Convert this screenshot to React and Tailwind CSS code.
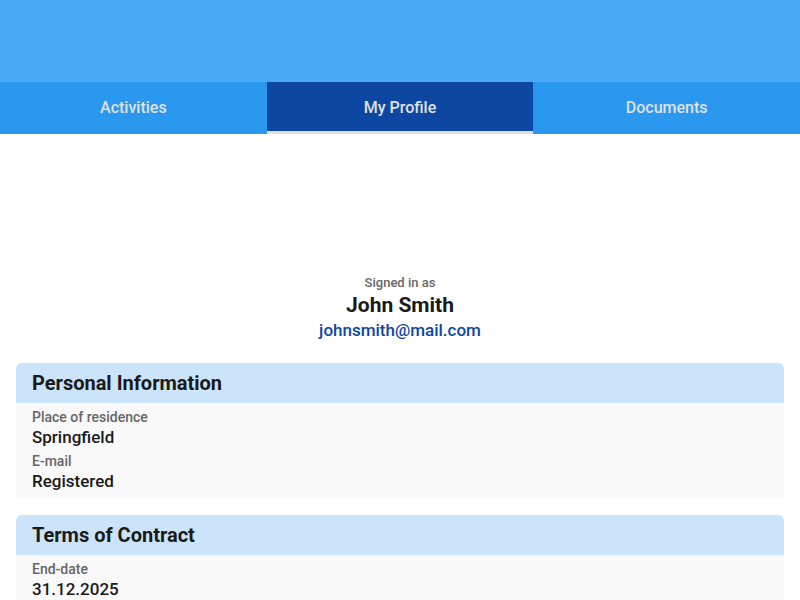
import { useState } from 'react';

const tabs = ['Activities', 'My Profile', 'Documents'];

const sections = [
  {
    title: 'Personal Information',
    fields: [
      { label: 'Place of residence', value: 'Springfield' },
      { label: 'E-mail', value: 'Registered' },
    ],
  },
  {
    title: 'Terms of Contract',
    fields: [{ label: 'End-date', value: '31.12.2025' }],
  },
];

export default function App() {
  const [active, setActive] = useState(1);

  return (
    <div className="min-h-screen bg-white font-['Roboto',sans-serif]">
      {/* Header */}
      <div className="h-[82px] bg-[#4aa9f5]"></div>

      {/* Tabs */}
      <div className="grid grid-cols-3 bg-[#2b98f0]">
        {tabs.map((tab, i) => (
          <button
            key={tab}
            type="button"
            onClick={() => setActive(i)}
            className={
              i === active
                ? 'h-[52px] bg-[#0d47a1] border-b-[3px] border-b-[#e0e0e0] pt-[3px] text-[16px] font-medium text-[#e0e0e0]'
                : 'h-[52px] text-[16px] font-medium text-[#e0e0e0]'
            }
          >
            {tab}
          </button>
        ))}
      </div>

      <div className="px-4">
        {/* Profile summary */}
        <div className="pt-[140px] flex flex-col items-center">
          <p className="text-[13px] leading-[18px] font-medium text-[#666666]">Signed in as</p>
          <h1 className="text-[21px] leading-[26px] font-bold text-[#1a1a1a]">John Smith</h1>
          <a href="#" className="text-[17px] leading-[24px] font-medium text-[#0d47a1]">
            johnsmith@mail.com
          </a>
        </div>

        {/* Sections */}
        <div className="mt-[21px] flex flex-col gap-[17px]">
          {sections.map((section) => (
            <div key={section.title} className="rounded-md overflow-hidden bg-[#f9f9f9]">
              <div className="h-10 bg-[#cbe4fa] px-4 flex items-center">
                <h2 className="text-[20px] font-bold text-[#1a1a1a]">{section.title}</h2>
              </div>
              <div className="px-4 pt-1 pb-[7px] flex flex-col gap-1">
                {section.fields.map((field) => (
                  <div key={field.label}>
                    <p className="text-[14px] leading-5 font-medium text-[#666666]">{field.label}</p>
                    <p className="text-[17px] leading-5 font-medium text-[#1a1a1a]">{field.value}</p>
                  </div>
                ))}
              </div>
            </div>
          ))}
        </div>
      </div>
    </div>
  );
}
